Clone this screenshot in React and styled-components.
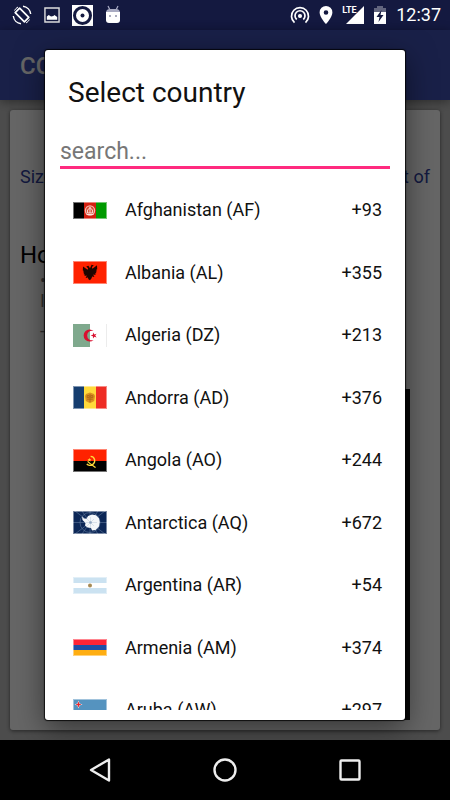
import { useState } from 'react';
import styled, { createGlobalStyle } from 'styled-components';

const countries = [
  { name: 'Afghanistan', code: 'AF', dial: '+93', height: 17 },
  { name: 'Albania', code: 'AL', dial: '+355', height: 23 },
  { name: 'Algeria', code: 'DZ', dial: '+213', height: 23 },
  { name: 'Andorra', code: 'AD', dial: '+376', height: 23 },
  { name: 'Angola', code: 'AO', dial: '+244', height: 23 },
  { name: 'Antarctica', code: 'AQ', dial: '+672', height: 23 },
  { name: 'Argentina', code: 'AR', dial: '+54', height: 17 },
  { name: 'Armenia', code: 'AM', dial: '+374', height: 17 },
  { name: 'Aruba', code: 'AW', dial: '+297', height: 23 },
];

const flags = {
  AF: (
    <>
      <path fill="#000" d="M0 0h11v17H0z" />
      <path fill="#d32011" d="M11 0h12v17H11z" />
      <path fill="#009a00" d="M23 0h11v17H23z" />
      <circle cx="17" cy="8.5" r="4.6" fill="#d8452f" stroke="#f3b9ae" strokeWidth="1.3" />
      <path d="M14.6 11V8l2.4-2.4L19.4 8v3zM13.5 12.5h7M17 5v6" fill="none" stroke="#fbe3dd" strokeWidth="1" />
    </>
  ),
  AL: (
    <>
      <path fill="#ff2200" d="M0 0h34v23H0z" />
      <path
        fill="#1c0500"
        d="M17 7.2 15.4 4.8l-2.2.8 1.9 1.6-.5 1.6-4.6-3.4-.2 4 1.2.6-1 1 1.3 1-.8 1 1.4.7-.5 1.3 2.4-.5-1.2 2.6 2.3-.6.5 1.8L17 19.3l1.6-2.1.5-1.8 2.3.6-1.2-2.6 2.4.5-.5-1.3 1.4-.7-.8-1 1.3-1-1-1 1.2-.6-.2-4-4.6 3.4-.5-1.6 1.9-1.6-2.2-.8z"
      />
    </>
  ),
  DZ: (
    <>
      <path fill="#fff" d="M17 0h17v23H17z" />
      <path fill="#7fa98d" d="M0 0h17v23H0z" />
      <path fill="#d90f2f" d="M20.6 7A6 6 0 1 0 20.6 16 4.8 4.8 0 1 1 20.6 7z" />
      <path fill="#d90f2f" d="m17.6 11.5 2.3-.7.1-2.3 1.4 1.9 2.2-.7-1.4 1.8 1.4 1.9-2.2-.7-1.4 1.8-.1-2.3z" />
      <path fill="#ececec" d="M33 0h1v23h-1z" />
    </>
  ),
  AD: (
    <>
      <path fill="#153d6f" d="M0 0h11v23H0z" />
      <path fill="#ffd93a" d="M11 0h12v23H11z" />
      <path fill="#ee2c24" d="M23 0h11v23H23z" />
      <path fill="#d9901f" d="M13 8l4-1.6L21 8l1 2-.8 5L17 17.2 12.8 15 12 10z" />
      <path d="M14.2 9.6h2v2h-2zM17.8 9.6h2v2h-2zM14.2 13.2h5.6M17 8v8" fill="none" stroke="#a85f16" strokeWidth=".8" />
    </>
  ),
  AO: (
    <>
      <path fill="#ff2200" d="M0 0h34v12H0z" />
      <path fill="#000" d="M0 12h34v11H0z" />
      <path d="M17.6 7.4c4.6.2 5.4 6 2 8.2-1.8 1.2-4.6 1-5.8-.8" fill="none" stroke="#ffd93a" strokeWidth="1.3" />
      <path d="M14.6 12.4c2.4 2.4 5 4 8 6.2" fill="none" stroke="#ffd93a" strokeWidth="1.2" />
      <path fill="#ffd93a" d="m16.4 9 .6 1.2 1.3.1-1 .9.3 1.3-1.2-.7-1.2.7.3-1.3-1-.9 1.3-.1z" />
    </>
  ),
  AQ: (
    <>
      <path fill="#0c2757" d="M0 0h34v23H0z" />
      <g fill="none" stroke="#5f789c" strokeWidth=".6">
        <path d="M17 0v23M0 11.5h34M2 0l30 23M32 0 2 23M9 0l16 23M25 0 9 23" />
        <circle cx="17" cy="11.5" r="10" />
      </g>
      <path
        fill="#f4f7fa"
        d="m9 5.5 2 2.100 2.500.2L15 5l4-1.500 4 .8 3 3 .8 3.700-.8 4.500-3.400 3.500-3.600.5-1-2.500-3.500-.5-2.500-2 .5-2.500L9.500 9z"
      />
      <path d="M17.5 6v11M13 11.5h11M14 8l7 7M21 8l-7 7" stroke="#bccbdc" strokeWidth=".5" />
      <circle cx="17.5" cy="11.5" r="1.3" fill="#8fa5c0" />
    </>
  ),
  AR: (
    <>
      <path fill="#fff" d="M0 0h34v17H0z" />
      <path fill="#cbe2f1" d="M0 0h34v6H0zM0 11h34v6H0z" />
      <circle cx="17" cy="8.5" r="2" fill="#a78b55" />
    </>
  ),
  AM: (
    <>
      <path fill="#ff2436" d="M0 0h34v6H0z" />
      <path fill="#1f4fa6" d="M0 6h34v5H0z" />
      <path fill="#ffae12" d="M0 11h34v6H0z" />
    </>
  ),
  AW: (
    <>
      <path fill="#5593bf" d="M0 0h34v23H0z" />
      <path fill="#fff" d="m5.5 1.5 1.1 2.9 2.9 1.1-2.9 1.1-1.1 2.9-1.1-2.9-2.9-1.1 2.9-1.1z" />
      <path fill="#e8242c" d="m5.5 2.3.8 2.4 2.4.8-2.4.8-.8 2.4-.8-2.4-2.4-.8 2.4-.8z" />
    </>
  ),
};

const Flag = ({ code, height }) => (
  <svg width="34" height={height} viewBox={`0 0 34 ${height}`} aria-hidden="true">
    {flags[code]}
    {code !== 'DZ' && (
      <rect x=".5" y=".5" width="33" height={height - 1} fill="none" stroke="#fff" strokeOpacity=".45" />
    )}
  </svg>
);

const App = () => {
  const [query, setQuery] = useState('');
  const visible = countries.filter(({ name }) =>
    name.toLowerCase().includes(query.toLowerCase())
  );

  return (
    <Screen>
      <GlobalStyle />
      <StatusBar>
        <StatusGroup $gap="12px">
          <svg width="20" height="20" viewBox="0 0 20 20" fill="none" stroke="#fff">
            <path d="M7.6 3.2 16.8 12.4 12.4 16.8 3.2 7.6z" strokeWidth="1.7" strokeLinejoin="round" />
            <path d="M11 1.3a8.8 8.8 0 0 1 7.700 7.700M9 18.700A8.800 8.800 0 0 1 1.300 11" strokeWidth="1.4" />
            <path d="M2.500 5.500a8.500 8.500 0 0 1 3.500-3.500M17.500 14.500a8.500 8.500 0 0 1-3.500 3.500" strokeWidth="1" />
          </svg>
          <svg width="16" height="16" viewBox="0 0 17 17">
            <path d="M1 1h15v15H1z" fill="none" stroke="#ddd" strokeWidth="1.5" />
            <path d="M3 13.500V10l2-1.500L7.500 10l2.500-.5 1-1 3 2v3z" fill="#fff" />
          </svg>
          <svg width="21" height="21" viewBox="0 0 21 21">
            <path d="M0 0h21v21H0z" fill="#fff" />
            <circle cx="10.5" cy="10.5" r="8" fill="none" stroke="#141940" strokeWidth="3" />
            <circle cx="10.5" cy="10.5" r="2" fill="#141940" />
          </svg>
          <svg width="16" height="20" viewBox="0 0 16 20">
            <path d="M3 1l2 4M13 1l-2 4" stroke="#aaadc6" strokeWidth="1.2" />
            <path d="M1 8q0-4 4-4h6q4 0 4 4z" fill="#a9abc2" />
            <path d="M1 7h14v8q0 3-3 3H4q-3 0-3-3z" fill="#fff" />
            <circle cx="5" cy="11" r="1" fill="#8f91a8" />
            <circle cx="11" cy="11" r="1" fill="#8f91a8" />
          </svg>
        </StatusGroup>
        <StatusGroup $gap="9px">
          <svg width="20" height="20" viewBox="0 0 20 20" fill="none" stroke="#fff" strokeWidth="1.7">
            <path d="M4.500 17.600a8.500 8.500 0 1 1 11 0" />
            <path d="M6.700 14.500a5 5 0 1 1 6.600 0" />
            <circle cx="10" cy="11" r="1.2" fill="#fff" />
          </svg>
          <svg width="14" height="20" viewBox="0 0 14 20">
            <path
              fill="#fff"
              fillRule="evenodd"
              d="M7 1a6.400 6.400 0 0 0-6.400 6.400C.6 12 7 19 7 19s6.400-7 6.400-11.600A6.400 6.400 0 0 0 7 1zm0 4.200a2.300 2.300 0 1 1 0 4.600 2.300 2.300 0 0 1 0-4.600z"
            />
          </svg>
          <Signal>
            <small>LTE</small>
            <svg width="18" height="18" viewBox="0 0 18 18">
              <path d="M18 0v18H0z" fill="#fff" />
            </svg>
          </Signal>
          <svg width="14" height="20" viewBox="0 0 14 20">
            <path d="M4 1h6v2h3v4H1V3h3z" fill="#62657f" />
            <path d="M1 7h12v12H1z" fill="#fff" />
            <path d="M8.500 5 3.500 12h3l-1 5 5-7h-3z" fill="#141940" />
          </svg>
          <Clock>12:37</Clock>
        </StatusGroup>
      </StatusBar>

      <Stage>
        <Page aria-hidden="true">
          <AppBar>CCP</AppBar>
          <Card>
            <Intro>
              <span>Size</span>
              <span>part of</span>
            </Intro>
            <Heading>How</Heading>
            <Notes>
              <span>•</span>
              <span>I</span>
              <span>-</span>
            </Notes>
            <Preview />
          </Card>
        </Page>

        <Scrim>
          <Dialog role="dialog" aria-labelledby="picker-title">
            <Title id="picker-title">Select country</Title>
            <Search
              type="text"
              aria-label="Search country"
              placeholder="search..."
              value={query}
              onChange={(event) => setQuery(event.target.value)}
            />
            <CountryList>
              {visible.map(({ name, code, dial, height }) => (
                <li key={code}>
                  <CountryButton type="button">
                    <Flag code={code} height={height} />
                    <CountryName>
                      {name} ({code})
                    </CountryName>
                    <span>{dial}</span>
                  </CountryButton>
                </li>
              ))}
            </CountryList>
          </Dialog>
        </Scrim>
      </Stage>

      <NavBar>
        <NavButton type="button" aria-label="Back">
          <svg width="26" height="26" viewBox="0 0 26 26">
            <path d="M22 2.500v21L4 13z" />
          </svg>
        </NavButton>
        <NavButton type="button" aria-label="Home">
          <svg width="26" height="26" viewBox="0 0 26 26">
            <circle cx="13" cy="13" r="10.5" />
          </svg>
        </NavButton>
        <NavButton type="button" aria-label="Recent apps">
          <svg width="26" height="26" viewBox="0 0 26 26">
            <rect x="3.5" y="3.5" width="19" height="19" rx="1" />
          </svg>
        </NavButton>
      </NavBar>
    </Screen>
  );
};

const GlobalStyle = createGlobalStyle`
  * {
    box-sizing: border-box;
  }

  body {
    margin: 0;
    font-family: Roboto, 'Liberation Sans', sans-serif;
  }

  svg {
    display: block;
    flex: none;
  }
`;

const Screen = styled.div`
  display: flex;
  flex-direction: column;
  height: 100vh;
  overflow: hidden;
  background: #000;
`;

const StatusBar = styled.header`
  display: flex;
  justify-content: space-between;
  align-items: center;
  flex: none;
  height: 30px;
  padding: 0 9px 0 12px;
  background: #141940;
  color: #fff;
`;

const StatusGroup = styled.div`
  display: flex;
  align-items: center;
  gap: ${props => props.$gap};
`;

const Signal = styled.div`
  position: relative;
  padding-left: 4px;

  small {
    position: absolute;
    top: 0;
    left: 0;
    font-size: 9px;
    line-height: 9px;
    font-weight: 700;
  }
`;

const Clock = styled.time`
  font-size: 18px;
  line-height: 20px;
`;

const Stage = styled.main`
  position: relative;
  flex: 1;
  min-height: 0;
`;

const Page = styled.div`
  display: flex;
  flex-direction: column;
  height: 100%;
  background: #bfbfbf;
`;

const AppBar = styled.div`
  flex: none;
  padding: 2px 20px 0;
  font-size: 24px;
  line-height: 68px;
  font-weight: 500;
  color: #fff;
  background: #3f51b5;
  box-shadow: 0 2px 10px rgba(0, 0, 0, 0.4);
`;

const Card = styled.div`
  display: flex;
  flex-direction: column;
  flex: 1;
  margin: 10px;
  padding: 55px 10px 10px;
  border-radius: 3px;
  background: #fff;
  box-shadow: 0 1px 4px rgba(0, 0, 0, 0.5);
`;

const Intro = styled.div`
  display: flex;
  justify-content: space-between;
  font-size: 18px;
  line-height: 24px;
  color: #303f9f;
`;

const Heading = styled.div`
  margin-top: 52px;
  font-size: 24px;
  line-height: 28px;
`;

const Notes = styled.div`
  display: flex;
  flex-direction: column;
  padding: 2px 20px;
  font-size: 18px;
  line-height: 20px;
  color: #777;

  span:last-child {
    margin-top: 10px;
  }
`;

const Preview = styled.div`
  flex: 1;
  margin: 46px 20px 0 30px;
  background: #111;
`;

const Scrim = styled.div`
  position: absolute;
  inset: 0;
  display: flex;
  padding: 20px 45px;
  background: rgba(0, 0, 0, 0.6);
`;

const Dialog = styled.section`
  display: flex;
  flex-direction: column;
  flex: 1;
  min-width: 0;
  padding: 0 0 10px;
  border-radius: 3px;
  background: #fff;
  color: #111;
  box-shadow: 0 0 1px 1px rgba(0, 0, 0, 0.8), 0 8px 30px rgba(0, 0, 0, 0.5);
`;

const Title = styled.h1`
  margin: 25px 23px 21px;
  font-size: 28px;
  line-height: 36px;
  font-weight: 400;
`;

const Search = styled.input`
  flex: none;
  height: 37px;
  margin: 0 15px 10px;
  padding: 4px 0 0;
  border: 0;
  border-bottom: 3px solid #ff2a7f;
  border-radius: 0;
  outline: 0;
  background: none;
  font: 23px/28px Roboto, 'Liberation Sans', sans-serif;

  &::placeholder {
    color: #777;
  }
`;

const CountryList = styled.ul`
  display: grid;
  grid-auto-rows: 62px 63px;
  flex: 1;
  min-height: 0;
  margin: 0;
  padding: 0;
  overflow-y: auto;
  scrollbar-width: none;
  list-style: none;
`;

const CountryButton = styled.button`
  display: flex;
  align-items: center;
  gap: 18px;
  width: 100%;
  height: 100%;
  padding: 0 23px 0 28px;
  border: 0;
  background: none;
  color: inherit;
  font: 18px/24px Roboto, 'Liberation Sans', sans-serif;
  text-align: left;
  cursor: pointer;
`;

const CountryName = styled.span`
  flex: 1;
`;

const NavBar = styled.nav`
  display: flex;
  justify-content: center;
  flex: none;
  height: 60px;
  background: #000;
`;

const NavButton = styled.button`
  display: flex;
  align-items: center;
  justify-content: center;
  width: 125px;
  padding: 0;
  border: 0;
  background: none;
  cursor: pointer;

  svg {
    fill: none;
    stroke: #eee;
    stroke-width: 2.4;
    stroke-linejoin: round;
  }
`;

export default App;
